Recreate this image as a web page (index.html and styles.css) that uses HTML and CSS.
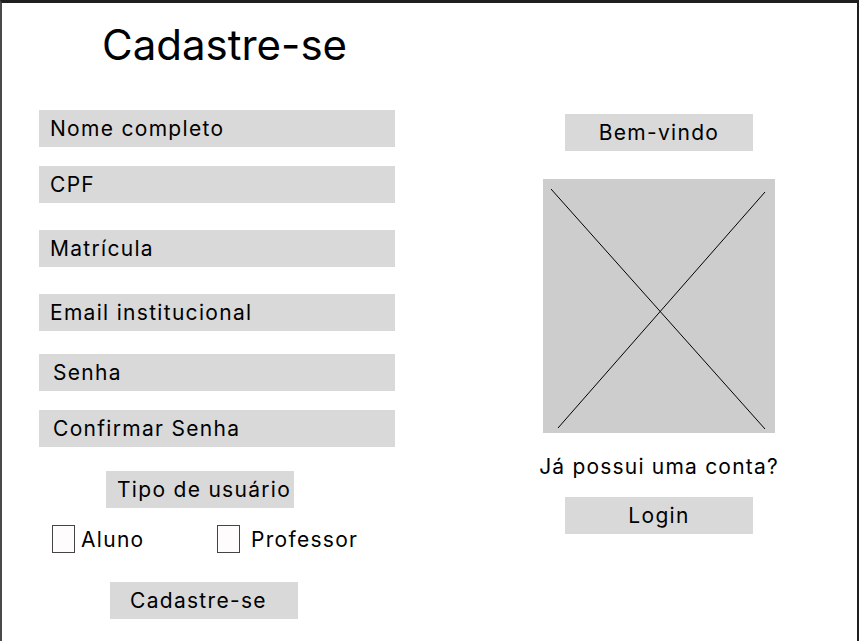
FILE: index.html
```html
<!DOCTYPE html>
<html lang="pt-BR">
<head>
    <meta charset="UTF-8">
    <title>Cadastre-se</title>
    <link rel="stylesheet" href="styles.css">
</head>
<body>
    <div class="frame">
        <div class="form">
            <h1 class="title">Cadastre-se</h1>

            <div class="field first">Nome completo</div>
            <div class="field gap-s">CPF</div>
            <div class="field gap-l">Matrícula</div>
            <div class="field gap-l">Email institucional</div>
            <div class="field gap-m pad-l">Senha</div>
            <div class="field gap-s pad-l">Confirmar Senha</div>

            <div class="box type">Tipo de usuário</div>

            <div class="checks">
                <label class="check"><span class="tick"></span>Aluno</label>
                <label class="check wide"><span class="tick"></span>Professor</label>
            </div>

            <div class="box submit">Cadastre-se</div>
        </div>

        <div class="aside">
            <div class="box welcome">Bem-vindo</div>
            <!-- imagem placeholder -->
            <div class="picture">
                <svg width="232" height="254" viewBox="0 0 232 254">
                    <line x1="8" y1="10" x2="222" y2="250" stroke="#000" stroke-width="1"/>
                    <line x1="222" y1="13" x2="15" y2="249" stroke="#000" stroke-width="1"/>
                </svg>
            </div>
            <p class="question">Já possui uma conta?</p>
            <div class="box login">Login</div>
        </div>
    </div>
</body>
</html>
```

FILE: styles.css
```css
html, body {
    margin: 0;
    padding: 0;
    background: #ffffff;
}
body {
    font-family: Inter, "Noto Sans", sans-serif;
    color: #000;
}
.frame {
    box-sizing: border-box;
    width: 859px;
    height: 641px;
    border-top: 3px solid #1f1f1f;
    border-left: 2px solid #4a4a4a;
    border-right: 2px solid #1f1f1f;
    display: flex;
    overflow: hidden;
}
.form {
    flex: 0 0 518px;
    display: flex;
    flex-direction: column;
    align-items: flex-start;
    padding-left: 37px;
    box-sizing: border-box;
}
.title {
    margin: 21px 0 0 63px;
    font-size: 42px;
    line-height: 42px;
    font-weight: 400;
}
.field {
    box-sizing: border-box;
    width: 356px;
    height: 37px;
    line-height: 37px;
    padding-left: 11px;
    background: #d9d9d9;
    font-size: 21px;
    letter-spacing: 1.3px;
}
.field.first { margin-top: 44px; }
.field.gap-s { margin-top: 19px; }
.field.gap-m { margin-top: 23px; }
.field.gap-l { margin-top: 27px; }
.field.pad-l { padding-left: 14px; }

.box {
    box-sizing: border-box;
    width: 188px;
    height: 37px;
    line-height: 37px;
    background: #d9d9d9;
    font-size: 21px;
    letter-spacing: 1.3px;
}
.type {
    margin: 24px 0 0 67px;
    padding-left: 11px;
}
.checks {
    display: flex;
    margin: 17px 0 0 13px;
}
.check {
    display: flex;
    align-items: center;
    gap: 6px;
    font-size: 21px;
    letter-spacing: 1.3px;
    height: 28px;
    width: 165px;
}
.check.wide {
    width: auto;
    gap: 11px;
}
.tick {
    box-sizing: border-box;
    width: 23px;
    height: 28px;
    border: 1.5px solid #444;
    background: #fffcfd;
}
.submit {
    margin: 29px 0 0 71px;
    padding-left: 20px;
}

.aside {
    flex: 0 0 278px;
    display: flex;
    flex-direction: column;
    align-items: center;
}
.welcome {
    margin-top: 111px;
    text-align: center;
}
.picture {
    margin-top: 28px;
    width: 232px;
    height: 254px;
    background: #cdcdcd;
}
.picture svg {
    display: block;
}
.question {
    margin: 21px 0 0;
    font-size: 21px;
    line-height: 26px;
    letter-spacing: 1.2px;
}
.login {
    margin-top: 17px;
    text-align: center;
}
```
